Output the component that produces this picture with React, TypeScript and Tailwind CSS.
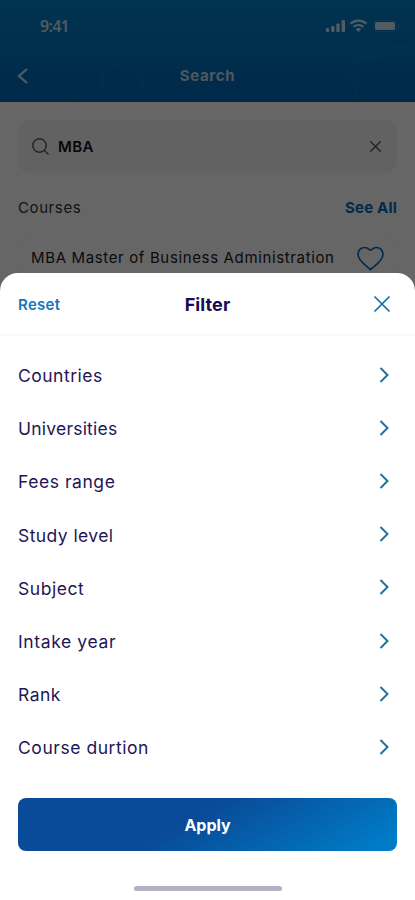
const FILTERS = [
  { label: "Countries", tracking: "tracking-[0.5px]" },
  { label: "Universities", tracking: "tracking-[0.22px]" },
  { label: "Fees range", tracking: "tracking-[0.55px]" },
  { label: "Study level", tracking: "tracking-[0.42px]" },
  { label: "Subject", tracking: "tracking-[0.55px]" },
  { label: "Intake year", tracking: "tracking-[0.62px]" },
  { label: "Rank", tracking: "tracking-[0.5px]" },
  { label: "Course durtion", tracking: "tracking-[0.55px]" },
];

function StatusBar() {
  return (
    <div className="flex h-[52px] items-center justify-between pl-10 pr-[15px] text-white/80">
      <span className="font-['Open_Sans',sans-serif] text-[16px] leading-5 font-semibold tracking-[-0.7px]">9:41</span>
      <svg width="75" height="16" viewBox="0 0 75 16" fill="currentColor">
        <rect x="1" y="10" width="3" height="4" rx="0.8" />
        <rect x="6.2" y="8" width="3.2" height="6" rx="0.8" />
        <rect x="11.4" y="5.5" width="3.2" height="8.500" rx="0.8" />
        <rect x="16.600" y="2" width="3.400" height="12" rx="0.8" />
        <path d="M25.500 5.600a12 12 0 0 1 16 0" fill="none" stroke="currentColor" strokeWidth="2.200" />
        <path d="M28.500 8.800a7.700 7.700 0 0 1 10 0" fill="none" stroke="currentColor" strokeWidth="2" />
        <path d="M30.800 11a4.500 4.500 0 0 1 5.400 0l-2.700 3z" />
        <rect x="48.500" y="2.500" width="23.500" height="11" rx="3" fill="none" stroke="currentColor" strokeOpacity="0.15" />
        <rect x="50" y="4" width="20" height="8" rx="1.500" />
        <path d="M73 6v4q1.500-.5 1.500-2T73 6z" opacity="0.25" />
      </svg>
    </div>
  );
}

function Header() {
  return (
    <header className="relative h-[102px] bg-linear-to-b from-[#0080c8] to-[#0068b8]">
      <svg className="absolute inset-0" width="415" height="102" viewBox="0 0 415 102" fill="none" stroke="#fff" strokeOpacity="0.07">
        <path d="M75 99q10-8 25-4 5-8 2-18 1-8 9-8l3-5 6 6q13-5 20 3 6 9 0 22" />
        <path d="M415 51q-14-10-27 0-6 7-14 8-17-4-21 5-4 10 2 20 5 6-1 14M364 91q10 7 18 1" />
      </svg>
      <StatusBar />
      <div className="grid h-12 grid-cols-[1fr_auto_1fr] items-center px-4">
        <svg width="14" height="18" viewBox="0 0 14 18" fill="none" stroke="#fff" strokeOpacity="0.8" strokeWidth="2.300">
          <path d="M11 2 3 9l8 7" />
        </svg>
        <h1 className="text-[15px] font-bold tracking-[0.65px] text-white/75">Search</h1>
      </div>
    </header>
  );
}

function CloseIcon({ size, width }: { size: number; width: number }) {
  return (
    <svg width={size} height={size} viewBox="0 0 16 16" fill="none" stroke="currentColor" strokeWidth={width} strokeLinecap="round">
      <path d="m1 1 14 14M15 1 1 15" />
    </svg>
  );
}

function SearchPage() {
  return (
    <div>
      <Header />
      <main className="px-[18px] pt-[18px]">
        <div className="flex h-[53px] items-center rounded-xl bg-[#f5f5f5] pl-[14px] pr-4">
          <svg width="18" height="18" viewBox="0 0 18 18" fill="none" stroke="#58616c" strokeWidth="1.500">
            <circle cx="7.500" cy="7.500" r="6.700" />
            <path d="m12.500 12.500 4 4" />
          </svg>
          <span className="ml-2 flex-1 pt-px text-[15px] font-semibold tracking-[0.4px] text-[#101020]">MBA</span>
          <span className="text-[#505660]"><CloseIcon size={11} width={2} /></span>
        </div>
        <div className="mt-[23px] flex h-6 items-center justify-between">
          <h2 className="text-[15px] tracking-[0.6px] text-[#303038]">Courses</h2>
          <span className="text-[15px] font-bold tracking-[0.2px] text-[#0868b8]">See All</span>
        </div>
        <div className="mt-[15px] flex h-[46px] items-center rounded-xl border border-[#fafafa] pl-3 pr-3">
          <span className="flex-1 text-[15px] tracking-[0.64px] whitespace-nowrap text-[#202026]">
            MBA Master of Business Administration
          </span>
          <svg width="27" height="25" viewBox="0 0 28 26" fill="none" stroke="#0868b8" strokeWidth="1.700">
            <path d="M14 24.500C10 20.500 1 15.500 1 8.500 1 4.500 4 1.500 7.800 1.500q2.700 0 5 2.200 1.200.8 2.400 0 2.300-2.200 5-2.200C24 1.500 27 4.500 27 8.500c0 7-9 12-13 16z" />
          </svg>
        </div>
      </main>
    </div>
  );
}

function FilterSheet() {
  return (
    <section className="absolute inset-x-0 bottom-0 flex h-[627px] flex-col rounded-t-[18px] bg-white">
      <div className="grid h-[63px] grid-cols-[1fr_auto_1fr] items-center border-b-2 border-[#f9f9fa] px-[18px]">
        <button className="pt-[3px] text-left text-[15px] font-semibold tracking-[0.3px] text-[#1976be]">Reset</button>
        <h2 className="pt-px text-[18px] font-bold tracking-[0.1px] text-[#160b55]">Filter</h2>
        <button className="justify-self-end pt-px pr-[7px] text-[#126fa5]"><CloseIcon size={16} width={1.7} /></button>
      </div>
      <ul className="flex flex-col pt-3">
        {FILTERS.map(({ label, tracking }) => (
          <li key={label} className="flex h-[53.2px] items-center justify-between pl-[18px] pr-[25px]">
            <span className={`pt-[3px] text-[17.5px] text-[#1f1656] ${tracking}`}>{label}</span>
            <svg width="11" height="18" viewBox="0 0 11 18" fill="none" stroke="#22719d" strokeWidth="2">
              <path d="m1.500 2 7 7-7 7" />
            </svg>
          </li>
        ))}
      </ul>
      <button className="mx-[18px] mt-[24px] h-[53px] shrink-0 rounded-lg bg-[linear-gradient(150deg,#094b98_0%,#094b98_45%,#007cc7_95%)] pt-px text-[16px] font-bold text-white">
        Apply
      </button>
      <div className="mx-auto mt-[35px] h-[5px] w-[148px] rounded-full bg-[#b4b1c5]" />
    </section>
  );
}

export default function App() {
  return (
    <div className="relative h-[900px] w-[415px] overflow-hidden bg-white font-['Inter',sans-serif]">
      <SearchPage />
      <div className="absolute inset-0 bg-black/60" />
      <FilterSheet />
    </div>
  );
}
